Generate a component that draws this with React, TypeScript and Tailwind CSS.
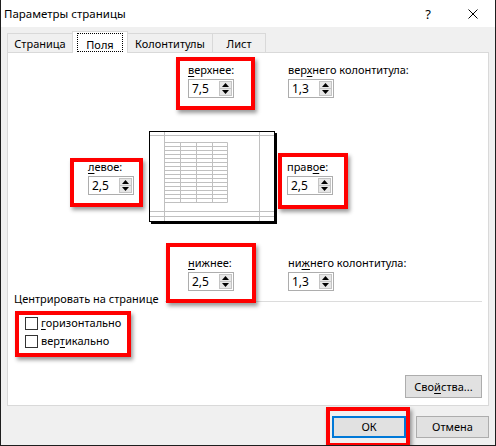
import React from "react";

function U({ children }: { children: React.ReactNode }) {
  return <span className="underline underline-offset-[2px] decoration-1">{children}</span>;
}

function Tri({ up }: { up?: boolean }) {
  return (
    <svg width="7" height="4" viewBox="0 0 7 4">
      {up ? <path d="M0 4 L3.5 0 L7 4 Z" fill="#000" /> : <path d="M0 0 L3.5 4 L7 0 Z" fill="#000" />}
    </svg>
  );
}

function Spin({ value }: { value: string }) {
  return (
    <div className="flex h-[19px] w-[46px] border border-[#adadad] bg-white">
      <div className="flex-1 pl-[3px] text-[12px] leading-[17px]">{value}</div>
      <div className="my-px mr-px flex w-[13px] flex-col border border-[#c4c4c4] bg-[#e6e6e6]">
        <div className="flex flex-1 items-center justify-center border-b border-[#c4c4c4]">
          <Tri up />
        </div>
        <div className="flex flex-1 items-center justify-center">
          <Tri />
        </div>
      </div>
    </div>
  );
}

function Field({ label, value }: { label: React.ReactNode; value: string }) {
  return (
    <div className="flex flex-col">
      <div className="h-[14px] whitespace-nowrap">{label}</div>
      <div className="mt-[2px]">
        <Spin value={value} />
      </div>
    </div>
  );
}

const red = "relative z-10 box-border border-4 border-[#ff0000] shadow-[2px_3px_4px_rgba(0,0,0,0.4)]";

function Preview() {
  const rows = Array.from({ length: 16 }, (_, i) => 11.5 + i * 4);
  const cols = [15.5, 31.5, 47.5, 63.5, 78.5];
  return (
    <svg width="128" height="93" viewBox="0 0 128 93">
      <rect x="2" y="2" width="126" height="91" fill="#000" />
      <rect x="0.5" y="0.5" width="125" height="90" fill="#fff" stroke="#000" />
      <g stroke="#c0c0c0" strokeWidth="1">
        <line x1="1" y1="4.5" x2="125" y2="4.5" />
        <line x1="1" y1="80.5" x2="125" y2="80.5" />
        <line x1="1" y1="85.5" x2="125" y2="85.5" />
        <line x1="15.5" y1="1" x2="15.5" y2="90" />
        <line x1="110.5" y1="1" x2="110.5" y2="90" />
        {rows.map((y) => (
          <line key={y} x1="15.5" y1={y} x2="78.5" y2={y} />
        ))}
        {cols.map((x) => (
          <line key={x} x1={x} y1="11.5" x2={x} y2="71.5" />
        ))}
      </g>
    </svg>
  );
}

function Check({ label }: { label: React.ReactNode }) {
  return (
    <div className="flex h-[14px] items-center gap-[3px]">
      <div className="h-[13px] w-[13px] border border-[#333] bg-white" />
      <span className="whitespace-nowrap">{label}</span>
    </div>
  );
}

export default function App() {
  return (
    <div className="h-[446px] w-[496px] overflow-hidden border-x border-b border-[#1e1e1e] bg-[#f0f0f0] font-['Noto_Sans',sans-serif] text-[11px] leading-[14px] text-black">
      {/* title bar */}
      <div className="flex h-[27px] items-center bg-white pl-[3px]">
        <span className="text-[11.5px]">Параметры страницы</span>
        <span className="ml-auto w-[8px] text-center text-[13px]">?</span>
        <svg className="ml-[36px] mr-[17px]" width="10" height="10" viewBox="0 0 10 10">
          <path d="M0.5 0.5 L9.5 9.5 M9.5 0.5 L0.5 9.5" stroke="#000" strokeWidth="1" />
        </svg>
      </div>

      {/* tabs */}
      <div className="flex h-[25px] items-end pl-[6px]">
        <div className="h-[19px] w-[65px] border border-r-0 border-b-0 border-[#d9d9d9] pt-[3px] text-center">Страница</div>
        <div className="relative z-10 -mb-px h-[22px] w-[56px] border border-b-0 border-[#d9d9d9] bg-white px-[4px] pt-px">
          <div className="h-[19px] border border-dotted border-black pt-[4px] text-center">Поля</div>
        </div>
        <div className="h-[19px] w-[85px] border border-l-0 border-b-0 border-[#d9d9d9] pt-[3px] text-center">Колонтитулы</div>
        <div className="h-[19px] w-[53px] border border-l-0 border-b-0 border-[#d9d9d9] pt-[3px] text-center">Лист</div>
      </div>

      {/* panel */}
      <div className="ml-[6px] flex h-[354px] w-[482px] flex-col border border-[#d9d9d9] bg-white">
        <div className="ml-[168px] mt-[4px] flex items-start">
          <div className={`${red} h-[53px] w-[79px] pl-[8px] pt-[2px]`}>
            <Field label={<><U>в</U>ерхнее:</>} value="7,5" />
          </div>
          <div className="ml-[33px] mt-[6px]">
            <Field label={<>вер<U>х</U>него колонтитула:</>} value="1,3" />
          </div>
        </div>

        <div className="ml-[62px] mt-[21px] flex items-start">
          <div className={`${red} mt-[27px] h-[49px] w-[73px] pl-[14px]`}>
            <div className="-mt-[2px]">
              <Field label={<><U>л</U>евое:</>} value="2,5" />
            </div>
          </div>
          <div className="ml-[6px]">
            <Preview />
          </div>
          <div className={`${red} ml-px mt-[22px] h-[56px] w-[70px] pl-[5px] pt-[3px]`}>
            <Field label={<>прав<U>о</U>е:</>} value="2,5" />
          </div>
        </div>

        <div className="ml-[158px] mt-[19px] flex items-start">
          <div className={`${red} h-[60px] w-[90px] pl-[18px] pt-[9px]`}>
            <Field label={<><U>н</U>ижнее:</>} value="2,5" />
          </div>
          <div className="ml-[32px] mt-[13px]">
            <Field label={<>ни<U>ж</U>него колонтитула:</>} value="1,3" />
          </div>
        </div>

        <div className="ml-[6px] -mt-[11px] flex items-start">
          <span className="whitespace-nowrap">Центрировать на странице</span>
          <div className="ml-[7px] mr-[6px] mt-[9px] h-px flex-1 bg-[#dcdcdc]" />
        </div>

        <div className={`${red} ml-[7px] mt-[5px] flex h-[46px] w-[116px] flex-col gap-[4px] pl-[6px] pt-px`}>
          <Check label={<><U>г</U>оризонтально</>} />
          <Check label={<>вер<U>т</U>икально</>} />
        </div>

        <div className="mb-[7px] mr-[6px] mt-auto flex h-[23px] w-[77px] items-center justify-center self-end border border-[#adadad] bg-[#e1e1e1]">
          Сво<U>й</U>ства...
        </div>
      </div>

      {/* buttons */}
      <div className="flex items-start">
        <div className={`${red} ml-[325px] mt-px h-[40px] w-[84px] pl-[2px] pt-[5px]`}>
          <div className="flex h-[22px] w-[74px] items-center justify-center border-2 border-[#0078d7] bg-[#e1e1e1]">ОК</div>
        </div>
        <div className="ml-[6px] mt-[10px] flex h-[22px] w-[73px] items-center justify-center border border-[#adadad] bg-[#e1e1e1]">
          Отмена
        </div>
      </div>
    </div>
  );
}
